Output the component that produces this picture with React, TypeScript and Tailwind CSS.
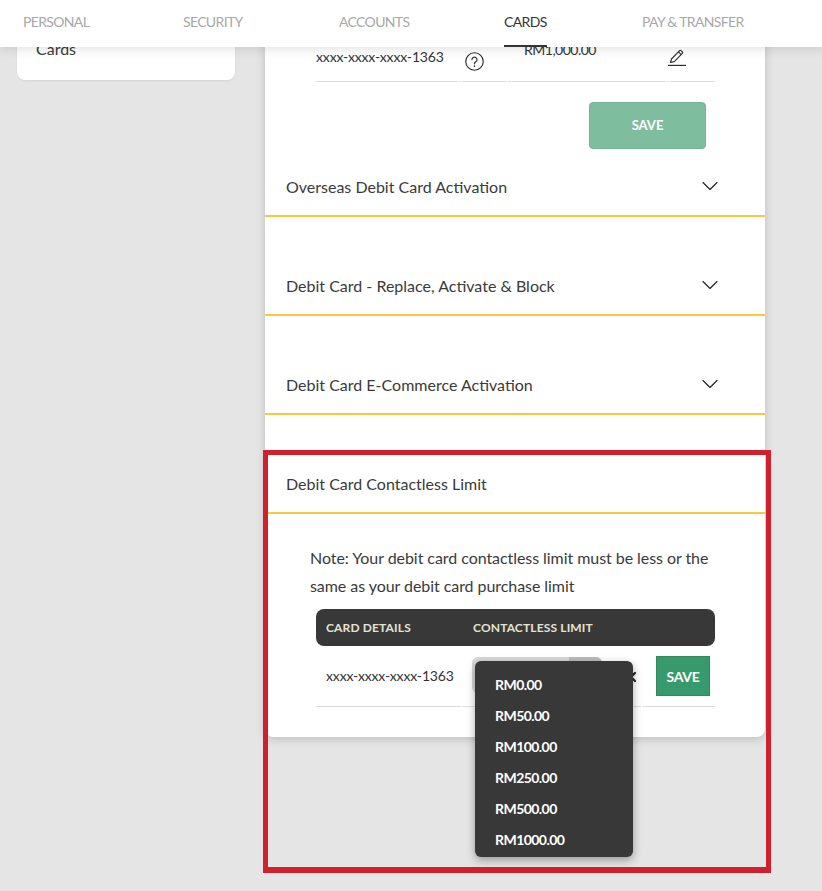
import { ChevronDown, X } from "lucide-react";

const tabs = ["PERSONAL", "SECURITY", "ACCOUNTS", "CARDS", "PAY & TRANSFER"];
const limits = ["RM0.00", "RM50.00", "RM100.00", "RM250.00", "RM500.00", "RM1000.00"];

const AccordionItem = ({ title, open }: { title: string; open?: boolean }) => {
	return (
		<div className={open ? "mt-[42px]" : "mt-[42px] first:mt-[11px]"}>
			<div className="flex h-[57px] items-center justify-between border-b-2 border-[#fdc63c] pr-[41px] pl-[21px] pb-px">
				<span className="text-[16px] text-[#3a3a3a]">{title}</span>
				{!open && <ChevronDown size={28} strokeWidth={1} className="-mt-[3px] text-[#222]" />}
			</div>
		</div>
	);
};

const App = () => {
	return (
		<div className="relative h-[891px] w-[822px] overflow-hidden bg-[#e5e5e5] font-['Lato','Liberation_Sans',sans-serif]">
			<header className="relative z-20 flex h-[47px] bg-white text-[14px] tracking-[-0.65px] shadow-[0_2px_10px_rgba(0,0,0,0.12)]">
				<nav className="grid w-full grid-cols-[160px_156px_165px_138px_1fr] pl-[23px] text-[#a8a8a8]">
					{tabs.map((tab) => (
						<div key={tab} className="pt-[11px]">
							<span
								className={
									tab === "CARDS"
										? "inline-block h-[36px] border-b-2 border-[#333] text-[#333]"
										: "inline-block"
								}
							>
								{tab}
							</span>
						</div>
					))}
				</nav>
			</header>

			<div className="-mt-[10px] flex items-start">
				<aside className="ml-[17px] h-[43px] w-[218px] rounded-b-lg bg-white pt-[2px] pl-[19px] text-[16px] leading-[20px] text-[#3a3a3a] shadow-[0_1px_2px_rgba(0,0,0,0.08)]">
					Cards
				</aside>

				<main className="ml-[30px] w-[500px] rounded-b-lg bg-white shadow-[0_2px_10px_rgba(0,0,0,0.18)]">
					<div className="ml-[51px] grid w-[399px] grid-cols-[145px_45px_158px_1fr] gap-x-px text-[14px] text-[#333]">
						<div className="h-[45px] border-b border-[#dedede] pt-[10px] leading-[20px] tracking-[-0.15px]">xxxx-xxxx-xxxx-1363</div>
						<div className="h-[45px] border-b border-[#dedede] pl-[3px] pt-[15px]">
							<svg width="19" height="19" viewBox="0 0 18 18" fill="none" stroke="#2c2c2c" strokeWidth="1.1" strokeLinecap="round">
								<circle cx="9" cy="9" r="8.3" />
								<path d="M6.6 7.2a2.4 2.4 0 1 1 3.6 2.1c-.8.5-1.2.9-1.2 1.9" />
								<path d="M9 13.3v.1" strokeWidth="1.5" />
							</svg>
						</div>
						<div className="h-[45px] border-b border-[#dedede] pl-[16px] pt-[3px] leading-[20px] tracking-[-0.5px]">RM1,000.00</div>
						<div className="h-[45px] border-b border-[#dedede] pt-[11px]">
							<svg width="20" height="20" viewBox="0 0 20 20" fill="none" stroke="#2c2c2c" strokeWidth="1.1" strokeLinejoin="round">
								<path d="M3.5 14.5 4.5 11 12.6 2.6a1 1 0 0 1 1.4 0l1.4 1.4a1 1 0 0 1 0 1.4L7.2 13.6Z" />
								<path d="m11.4 3.9 2.8 2.8" />
								<path d="M1 17.4h18" strokeWidth="1.2" />
							</svg>
						</div>
					</div>

					<div className="mt-[20px] ml-[324px] flex h-[47px] w-[117px] items-center justify-center rounded border border-[#74b596] bg-[#7fbd9f] text-[13px] font-bold text-white">
						SAVE
					</div>

					<div>
						<AccordionItem title="Overseas Debit Card Activation" />
						<AccordionItem title="Debit Card - Replace, Activate & Block" />
						<AccordionItem title="Debit Card E-Commerce Activation" />
						<AccordionItem title="Debit Card Contactless Limit" open />
					</div>

					<div className="pt-[30px] pb-[30px]">
						<p className="pl-[45px] pr-[50px] text-[16px] leading-[28px] tracking-[-0.06px] text-[#3a3a3a]">
							Note: Your debit card contactless limit must be less or the same as your debit card purchase limit
						</p>

						<div className="mt-[9px] ml-[51px] w-[399px]">
							<div className="grid h-[37px] grid-cols-[147px_1fr] items-center rounded-lg bg-[#383838] pl-[10px] text-[12px] font-bold tracking-[0.15px] text-[#e3e3d3]">
								<span>CARD DETAILS</span>
								<span>CONTACTLESS LIMIT</span>
							</div>
							<div className="grid h-[61px] grid-cols-[145px_179px_1fr] gap-x-px text-[14px] text-[#333]">
								<div className="flex items-center border-b border-[#dedede] pb-[2px] pl-[10px] tracking-[-0.15px]">xxxx-xxxx-xxxx-1363</div>
								<div className="relative flex items-start border-b border-[#dedede] pl-[10px] pt-[11px]">
									<div className="flex h-[36px] w-[130px] overflow-hidden rounded-md bg-[#d8d8d8]">
										<div className="flex-1" />
										<div className="w-[33px] bg-[#bcbcbc]" />
									</div>
									<X size={16} strokeWidth={3.2} className="absolute top-[23px] left-[161px] text-[#222]" />
									<ul className="absolute top-[15px] left-[13px] z-10 flex h-[196px] w-[158px] flex-col rounded-md bg-[#383838] px-[20px] pt-[8px] text-[14px] font-bold tracking-[-0.55px] text-white shadow-[0_3px_8px_rgba(0,0,0,0.35)]">
										{limits.map((limit) => (
											<li key={limit} className="h-[31px] leading-[31px]">
												{limit}
											</li>
										))}
									</ul>
								</div>
								<div className="border-b border-[#dedede] pt-[10px] pl-[12px]">
									<div className="ml-[2px] flex h-[40px] w-[54px] items-center justify-center border border-[#33875f] bg-[#379a6c] text-[14px] font-bold tracking-[-0.3px] text-white">
										SAVE
									</div>
								</div>
							</div>
						</div>
					</div>
				</main>
			</div>

			<div className="absolute top-[450px] left-[263px] z-30 h-[423px] w-[508px] border-[5px] border-b-[6px] border-[#cf202e]" />
		</div>
	);
};

export default App;
